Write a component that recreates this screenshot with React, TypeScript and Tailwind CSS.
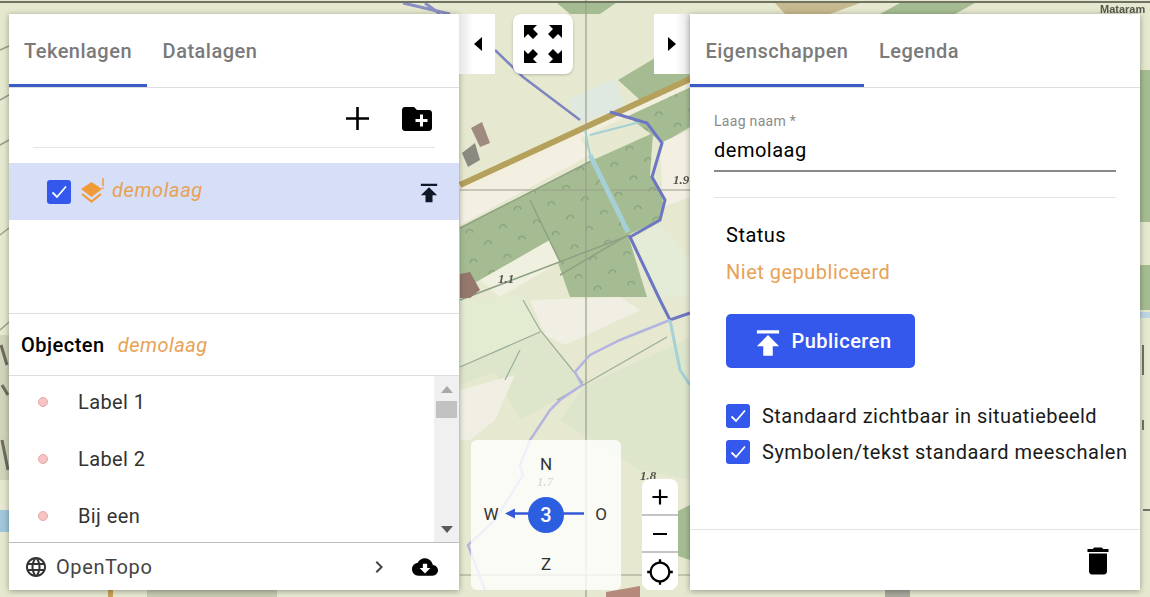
import React from "react";
import {
  MdAdd,
  MdChevronRight,
  MdCloudDownload,
  MdCreateNewFolder,
  MdDelete,
  MdGpsNotFixed,
  MdLanguage,
  MdPublish,
  MdRemove,
} from "react-icons/md";

const font = "font-['Roboto','Liberation_Sans',sans-serif]";

const MapBackground = () => (
  <svg className="absolute inset-0" width="1150" height="597" viewBox="0 0 1150 597">
    <defs>
      <pattern id="orchard" width="34" height="30" patternUnits="userSpaceOnUse" patternTransform="rotate(-8)">
        <path d="M4 10a3.5 3.5 0 0 1 7 0M21 26a3.5 3.5 0 0 1 7 0" stroke="#7b9674" strokeWidth="1" fill="none" />
      </pattern>
      <filter id="soft">
        <feGaussianBlur stdDeviation="0.6" />
      </filter>
    </defs>
    <g filter="url(#soft)">
      <rect width="1150" height="597" fill="#e6e9cf" />
      {/* fields */}
      <polygon points="460,228 593,160 653,133 650,175 665,200 660,220 628,235 647,297 570,297 550,240 480,280 460,290" fill="#a5bc92" />
      <polygon points="460,228 593,160 653,133 650,175 665,200 660,220 628,235 647,297 570,297 550,240 480,280 460,290" fill="url(#orchard)" />
      <polygon points="618,80 655,58 690,58 690,78 640,100" fill="#a5bc92" />
      <polygon points="623,113 673,90 690,82 690,127 663,143" fill="#a5bc92" />
      <polygon points="623,113 673,90 690,82 690,127 663,143" fill="url(#orchard)" />
      <polygon points="460,192 580,137 590,155 460,225" fill="#f3efe2" />
      <polygon points="660,143 690,130 690,197 663,207" fill="#f3efe2" />
      <polygon points="568,100 615,78 625,108 580,122" fill="#dfe9e0" />
      <polygon points="480,280 550,240 560,262 500,297" fill="#f0f0e0" />
      <polygon points="632,240 662,224 690,262 690,297 660,297" fill="#e4ecd8" />
      <polygon points="460,300 525,296 540,330 460,368" fill="#e3ebd1" />
      <polygon points="460,368 540,332 584,385 520,420 495,372 460,385" fill="#dde6cb" />
      <polygon points="584,386 690,338 690,480 640,470 560,420" fill="#dde6cb" />
      <polygon points="460,390 515,375 495,420 470,440 460,440" fill="#f1efe3" />
      <polygon points="530,300 620,297 640,310 565,345 545,335" fill="#f1efe3" />
      <polygon points="660,520 690,505 690,560 660,550" fill="#a5bc92" />
      {/* edges left visible around the panels */}
      <polygon points="1140,70 1150,70 1150,222 1140,222" fill="#a5bc92" />
      <polygon points="1140,265 1150,265 1150,310 1140,310" fill="#a5bc92" />
      <rect x="1140" y="312" width="10" height="6" fill="#bcd6e2" />
      <rect x="0" y="335" width="9" height="145" fill="#cfd4bb" />
      <rect x="0" y="510" width="9" height="22" fill="#9fc6dc" />
      <path d="M0 50L9 46M0 100L9 95M0 145L9 140M0 235L9 228M0 330L9 322" stroke="#9aa08c" strokeWidth="1.5" fill="none" />
      <path d="M1 345L7 365M2 385L8 395M2 440L8 470" stroke="#6f6a60" strokeWidth="3" fill="none" />
      <path d="M1143 345V375M1143 420V430M1143 510H1150" stroke="#6f7265" strokeWidth="2" fill="none" />
      <polygon points="557,3 616,3 600,14 570,14" fill="#a5bc92" />
      <polygon points="900,3 975,3 955,14 880,14" fill="#a5bc92" />
      <polygon points="775,3 860,3 830,14 785,14" fill="#c7b98f" />
      <path d="M403 3L450 14M425 3L440 14" stroke="#8a90c4" strokeWidth="3" fill="none" />
      <rect x="147" y="590" width="130" height="7" fill="#c6cab0" />
      <rect x="108" y="590" width="5" height="7" fill="#c9a25a" />
      <rect x="885" y="590" width="25" height="7" fill="#a8a89c" />
      {/* road */}
      <path d="M460 188L690 82" stroke="#f3efdf" strokeWidth="10" fill="none" />
      <path d="M460 185L690 79" stroke="#b5a05c" strokeWidth="6" fill="none" />
      {/* grid and ditch lines */}
      <path d="M586 0V597M460 190H690M460 575H690" stroke="#9aa08c" strokeWidth="1.2" fill="none" />
      <path d="M460 228L593 160M460 300L630 235M530 200L560 262M628 235L560 275" stroke="#8ea184" strokeWidth="1.5" fill="none" />
      <path d="M460 367L540 332M557 400L667 337M523 300L540 330L583 383M505 380L520 350" stroke="#98ad9a" strokeWidth="1.2" fill="none" />
      <path d="M590 155L628 232" stroke="#a5d0d6" strokeWidth="5" fill="none" />
      <path d="M585 130L590 155M590 135L640 122" stroke="#a5d0d6" strokeWidth="2" fill="none" />
      {/* water */}
      <path d="M495 50L523 77L580 120" stroke="#7d86c0" strokeWidth="2.5" fill="none" />
      <path d="M610 112L647 123L662 143L652 177L665 200L660 220L630 237L660 300L670 320L690 313" stroke="#6c76c2" strokeWidth="3" fill="none" />
      <path d="M670 320L620 340L590 355L575 372L582 385L560 400L550 410L530 440L520 465L523 475L495 520L468 545L485 590" stroke="#b3b4e0" strokeWidth="2.5" fill="none" />
      <path d="M670 320L680 370L690 385" stroke="#a5d0d6" strokeWidth="3" fill="none" />
      {/* buildings */}
      <polygon points="471,128 482,122 490,143 480,147" fill="#a08a80" />
      <polygon points="462,153 475,143 480,160 468,167" fill="#8a8a80" />
      <polygon points="460,274 470,272 480,290 470,298 460,298" fill="#95786c" />
      <polygon points="606,592 640,586 640,597 606,597" fill="#b58a7c" />
      <rect y="1" width="1150" height="2" fill="#6f7263" />
      {/* spot heights */}
      <g fontFamily="'Liberation Serif', serif" fontStyle="italic" fontWeight="700" fontSize="13" fill="#55584e">
        <text x="498" y="283">1.1</text>
        <text x="673" y="184">1.9</text>
        <text x="640" y="480">1.8</text>
        <text x="537" y="486">1.7</text>
        <text x="1100" y="13" fontStyle="normal" fontFamily="'Liberation Sans', sans-serif" fontSize="11">Mataram</text>
      </g>
    </g>
  </svg>
);

const Tab = ({ label, active, width }: { label: string; active?: boolean; width: string }) => (
  <div className={`flex h-[73px] items-center justify-center text-[20px] font-medium tracking-[0.5px] text-[#7a7a7a] ${width} ${active ? "border-b-[3px] border-[#3a5cc8] pt-[3px]" : ""}`}>
    {label}
  </div>
);

const Check = () => (
  <div className="flex h-6 w-6 shrink-0 items-center justify-center rounded-[3px] bg-[#3558ec]">
    <svg width="18" height="18" viewBox="0 0 18 18" fill="none">
      <path d="M2.5 9.5L7 14L16 3.5" stroke="white" strokeWidth="1.8" />
    </svg>
  </div>
);

const LayerWarningIcon = () => (
  <svg width="24" height="26" viewBox="0 0 24 26">
    <polygon points="0,11 10.5,4 21,11 10.5,19" fill="#f09a38" />
    <path d="M1 16L10.5 23.5L20 16" stroke="#f09a38" strokeWidth="2.2" fill="none" />
    <path d="M22 0V8" stroke="#f09a38" strokeWidth="1.5" />
    <path d="M22 9.5V11" stroke="#f09a38" strokeWidth="1.5" />
  </svg>
);

const ObjectRow = ({ label }: { label: string }) => (
  <div className="flex h-[57px] items-center pl-[29px]">
    <span className="h-[10px] w-[10px] rounded-full border border-[#e8a5a5] bg-[#f6c4c4]" />
    <span className="ml-[30px] mt-[1px] text-[20px] tracking-[0.4px] text-[#333]">{label}</span>
  </div>
);

const LeftPanel = () => (
  <div className="flex h-[576px] w-[450px] shrink-0 flex-col bg-white shadow-[0_1px_6px_rgba(0,0,0,0.35)]">
    <div className="flex border-b border-[#dedede]">
      <Tab label="Tekenlagen" active width="w-[138px]" />
      <Tab label="Datalagen" width="w-[126px]" />
    </div>
    <div className="mx-6 flex h-[60px] items-center justify-end border-b border-[#e4e4e4] pt-[2px] text-black">
      <svg width="23" height="23" viewBox="0 0 23 23">
        <path d="M11.5 0V23M0 11.5H23" stroke="black" strokeWidth="2.6" />
      </svg>
      <MdCreateNewFolder size={36} className="ml-[30px]" />
    </div>
    <div className="mt-[15px] flex h-[57px] items-center bg-[#d6def8] pl-[38px] pr-[16px]">
      <Check />
      <div className="mb-[2px] ml-[10px]"><LayerWarningIcon /></div>
      <span className="mb-[3px] ml-[7px] text-[20px] italic tracking-[0.6px] text-[#e8a255]">demolaag</span>
      <MdPublish size={28} className="ml-auto mt-[2px] text-[#111827]" />
    </div>
    <div className="h-[94px] border-b border-[#dedede]" />
    <div className="flex h-[62px] items-center border-b border-[#dedede] pl-3 text-[20px] tracking-[0.5px]">
      <span className="font-medium text-black">Objecten</span>
      <span className="ml-[13px] italic text-[#e8a255]">demolaag</span>
    </div>
    <div className="flex h-[166px] overflow-hidden">
      <div className="mt-[-3px] flex-1">
        <ObjectRow label="Label 1" />
        <ObjectRow label="Label 2" />
        <ObjectRow label="Bij een" />
      </div>
      <div className="flex w-[25px] flex-col items-center bg-[#f0f0f0] pt-[10px]">
        <svg width="12" height="7" viewBox="0 0 12 7"><polygon points="6,0 12,7 0,7" fill="#a8a8a8" /></svg>
        <div className="mt-[8px] h-[17px] w-[21px] bg-[#c2c2c2]" />
        <svg className="mb-[9px] mt-auto" width="12" height="7" viewBox="0 0 12 7"><polygon points="0,0 12,0 6,7" fill="#5a5a5a" /></svg>
      </div>
    </div>
    <div className="flex flex-1 items-center border-t border-[#bdbdbd] pl-[15px] pr-[21px] text-[#444]">
      <MdLanguage size={24} className="text-[#333]" />
      <span className="ml-[8px] text-[20px] tracking-[0.6px]">OpenTopo</span>
      <MdChevronRight size={24} className="ml-auto mr-[21px]" />
      <MdCloudDownload size={26} className="text-black" />
    </div>
  </div>
);

const RightPanel = () => (
  <div className="flex h-[576px] w-[450px] shrink-0 flex-col bg-white shadow-[0_1px_6px_rgba(0,0,0,0.35)]">
    <div className="flex border-b border-[#dedede]">
      <Tab label="Eigenschappen" active width="w-[174px]" />
      <Tab label="Legenda" width="w-[110px]" />
    </div>
    <div className="flex flex-1 flex-col px-6 pt-[24px]">
      <div className="text-[14px] leading-[18px] tracking-[0.3px] text-[#8a8a8a]">Laag naam *</div>
      <div className="mt-[2px] h-[40px] border-b-2 border-[#8a8a8a] pt-[5px] text-[20px] leading-[27px] tracking-[0.5px] text-black">demolaag</div>
      <div className="mt-[25px] border-t border-[#e4e4e4] pl-3 pt-[24px] tracking-[0.5px]">
        <div className="text-[20px] leading-[26px] text-black">Status</div>
        <div className="mt-[11px] text-[20px] leading-[26px] text-[#e8a255]">Niet gepubliceerd</div>
        <div className="mt-[29px] flex h-[54px] w-[189px] items-center justify-center gap-[4px] rounded-[5px] bg-[#3558ec] text-[20px] font-medium text-white">
          <MdPublish size={38} className="mt-[3px]" />
          <span>Publiceren</span>
        </div>
        <div className="mt-[36px] flex flex-col gap-3">
          <label className="flex items-center gap-3 whitespace-nowrap text-[20px] leading-6 tracking-[0.45px] text-[#1a1a1a]"><Check />Standaard zichtbaar in situatiebeeld</label>
          <label className="flex items-center gap-3 whitespace-nowrap text-[20px] leading-6 tracking-[0.5px] text-[#1a1a1a]"><Check />Symbolen/tekst standaard meeschalen</label>
        </div>
      </div>
    </div>
    <div className="flex h-[61px] items-center justify-end border-t border-[#e4e4e4] pr-[24px] pt-[2px]">
      <MdDelete size={36} className="text-black" />
    </div>
  </div>
);

const FullscreenIcon = () => (
  <svg width="38" height="38" viewBox="0 0 38 38" fill="black">
    <polygon points="0,0 13,0 9,4 14,9 9,14 4,9 0,13" />
    <polygon points="38,0 25,0 29,4 24,9 29,14 34,9 38,13" />
    <polygon points="0,38 13,38 9,34 14,29 9,24 4,29 0,25" />
    <polygon points="38,38 25,38 29,34 24,29 29,24 34,29 38,25" />
  </svg>
);

const Compass = () => (
  <div className="relative grid h-[150px] w-[150px] grid-cols-3 grid-rows-3 place-items-center rounded-md bg-white/80 text-[17px] text-[#333]">
    <span className="col-start-2">N</span>
    <span className="col-start-1 row-start-2 ml-[-10px]">W</span>
    <div className="z-10 col-start-2 row-start-2 flex h-9 w-9 items-center justify-center rounded-full bg-[#2b5fe0] text-[20px] font-medium text-white">3</div>
    <span className="col-start-3 row-start-2 ml-[10px]">O</span>
    <span className="col-start-2 row-start-3">Z</span>
    <svg className="absolute left-[34px] top-[68px]" width="80" height="12" viewBox="0 0 80 12">
      <path d="M6 5.5H79" stroke="#3558d8" strokeWidth="2.4" />
      <polygon points="0,5.5 10,0.5 10,10.5" fill="#3558d8" />
    </svg>
  </div>
);

const ZoomControl = () => (
  <div className="flex w-9 flex-col divide-y-2 divide-[#c4c4c4] rounded-lg bg-white text-black">
    <div className="flex h-[37px] items-center justify-center"><MdAdd size={26} /></div>
    <div className="flex h-[37px] items-center justify-center"><MdRemove size={24} /></div>
    <div className="flex h-[37px] items-center justify-center"><MdGpsNotFixed size={28} /></div>
  </div>
);

export default function App() {
  return (
    <div className={`relative h-[597px] w-[1150px] overflow-hidden ${font}`}>
      <MapBackground />
      <div className="relative flex h-full pl-[9px] pt-[14px]">
        <LeftPanel />
        <div className="flex h-[576px] w-[231px] flex-col justify-between">
          <div className="flex">
            <div className="flex h-[60px] w-[36px] items-center justify-center bg-gradient-to-r from-[#e6e6e6] to-white to-40%">
              <svg width="8" height="14" viewBox="0 0 8 14" className="ml-[2px]"><polygon points="8,0 8,14 0,7" fill="black" /></svg>
            </div>
            <div className="ml-[18px] flex h-[60px] w-[60px] items-center justify-center rounded-lg bg-white shadow-[0_1px_3px_rgba(0,0,0,0.2)]">
              <FullscreenIcon />
            </div>
            <div className="ml-auto flex h-[60px] w-[36px] items-center justify-center bg-gradient-to-l from-[#e6e6e6] to-white to-40%">
              <svg width="8" height="14" viewBox="0 0 8 14"><polygon points="0,0 0,14 8,7" fill="black" /></svg>
            </div>
          </div>
          <div className="flex items-end pl-3">
            <Compass />
            <div className="ml-[21px]"><ZoomControl /></div>
          </div>
        </div>
        <RightPanel />
      </div>
    </div>
  );
}
